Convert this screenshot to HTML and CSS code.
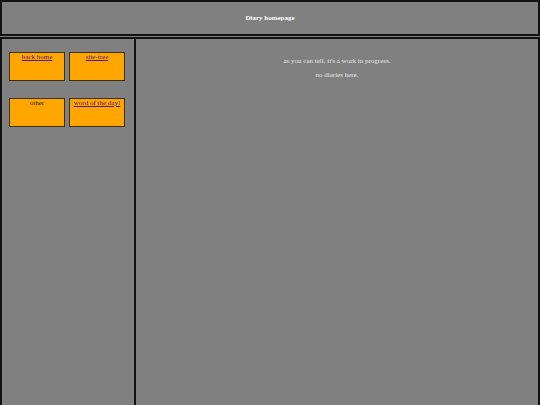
FILE: index.html
```html
<!DOCTYPE html>
<html>
<head>
<meta charset="utf-8">
<title>Diary homepage</title>
<link rel="stylesheet" href="styles.css">
</head>
<body>
<header class="top">
  <h1 class="title">Diary homepage</h1>
</header>
<div class="layout">
  <nav class="side">
    <div class="grid">
      <div class="tile"><a href="#">back home</a></div>
      <div class="tile"><a href="#">site-tree</a></div>
      <div class="tile"><span>other</span></div>
      <div class="tile"><a href="#">word of the day!</a></div>
    </div>
  </nav>
  <main class="main">
    <p>as you can tell, it's a work in progress.</p>
    <p>no diaries here.</p>
  </main>
</div>
</body>
</html>
```
FILE: styles.css
```css
html, body {
  margin: 0;
  height: 100%;
  background: #808080;
  font-family: "Liberation Serif", serif;
  font-size: 7px;
}
body {
  display: flex;
  flex-direction: column;
}
.top {
  border: 2px solid #111;
  height: 32px;
  display: flex;
  align-items: center;
  justify-content: center;
}
.title {
  margin: 0;
  font-size: 7px;
  font-weight: bold;
  color: #fff;
}
.layout {
  flex: 1;
  display: flex;
  margin-top: 1px;
}
.side {
  width: 118px;
  border: 2px solid #111;
  border-bottom: none;
  padding: 13px 7px;
}
.grid {
  display: grid;
  grid-template-columns: 56px 56px;
  column-gap: 4px;
  row-gap: 17px;
}
.tile {
  height: 27px;
  background: #ffa500;
  border: 1px solid #3d3000;
  text-align: center;
  color: #2a2200;
}
.tile a {
  color: #551a8b;
}
.main {
  flex: 1;
  border: 2px solid #111;
  border-left: none;
  border-bottom: none;
  text-align: center;
  color: #e6e6e6;
  padding-top: 18px;
}
.main p {
  margin: 0 0 6px;
}
```
